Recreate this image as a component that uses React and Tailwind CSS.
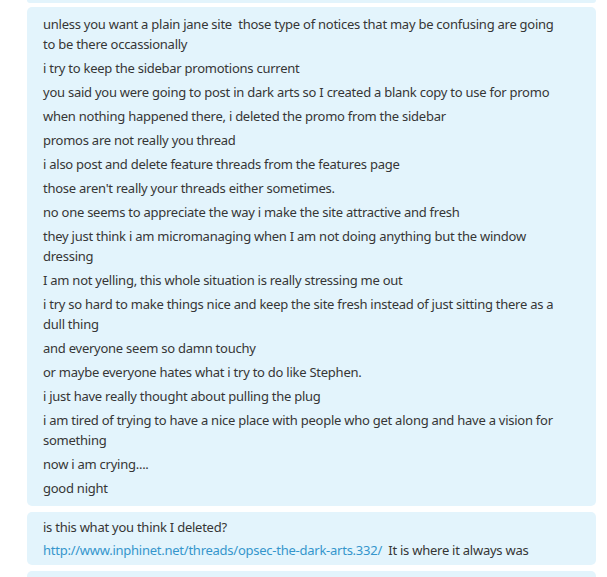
const lines1 = [
  ['unless you want a plain jane site  those type of notices that may be confusing are going', 'to be there occassionally'],
  ['i try to keep the sidebar promotions current'],
  ['you said you were going to post in dark arts so I created a blank copy to use for promo'],
  ['when nothing happened there, i deleted the promo from the sidebar'],
  ['promos are not really you thread'],
  ['i also post and delete feature threads from the features page'],
  ["those aren't really your threads either sometimes."],
  ['no one seems to appreciate the way i make the site attractive and fresh'],
  ['they just think i am micromanaging when I am not doing anything but the window', 'dressing'],
  ['I am not yelling, this whole situation is really stressing me out'],
  ['i try so hard to make things nice and keep the site fresh instead of just sitting there as a', 'dull thing'],
  ['and everyone seem so damn touchy'],
  ['or maybe everyone hates what i try to do like Stephen.'],
  ['i just have really thought about pulling the plug'],
  ['i am tired of trying to have a nice place with people who get along and have a vision for', 'something'],
  ['now i am crying....'],
  ['good night'],
];

function Para({ parts }) {
  return (
    <p className="whitespace-pre">
      {parts.map((t, i) => (
        <span key={i} className="block">{t}</span>
      ))}
    </p>
  );
}

export default function App() {
  return (
    <div
      className="min-h-[577px] bg-white pl-[27px] pr-[11px] text-[13px] leading-[20px] tracking-[-0.25px] text-[#363636]"
      style={{ fontFamily: '"Noto Sans", "Open Sans", sans-serif' }}
    >
      <div className="h-[3px] rounded-b-[5px] bg-[#e3f4fc]" />

      <div className="mt-[4px] flex flex-col gap-[4px] rounded-[5px] bg-[#e3f4fc] pl-[16px] pr-[10px] pt-[7px] pb-[8px]">
        {lines1.map((p, i) => (
          <Para key={i} parts={p} />
        ))}
      </div>

      <div className="mt-[6px] flex flex-col gap-[3px] rounded-[5px] bg-[#e3f4fc] pl-[16px] pr-[10px] pt-[5px] pb-[5px]">
        <p>is this what you think I deleted?</p>
        <p className="whitespace-pre">
          <a href="#" className="text-[#3596cc]">http://www.inphinet.net/threads/opsec-the-dark-arts.332/</a>
          {'  It is where it always was'}
        </p>
      </div>

      <div className="mt-[6px] h-[6px] rounded-t-[5px] bg-[#e3f4fc]" />
    </div>
  );
}
